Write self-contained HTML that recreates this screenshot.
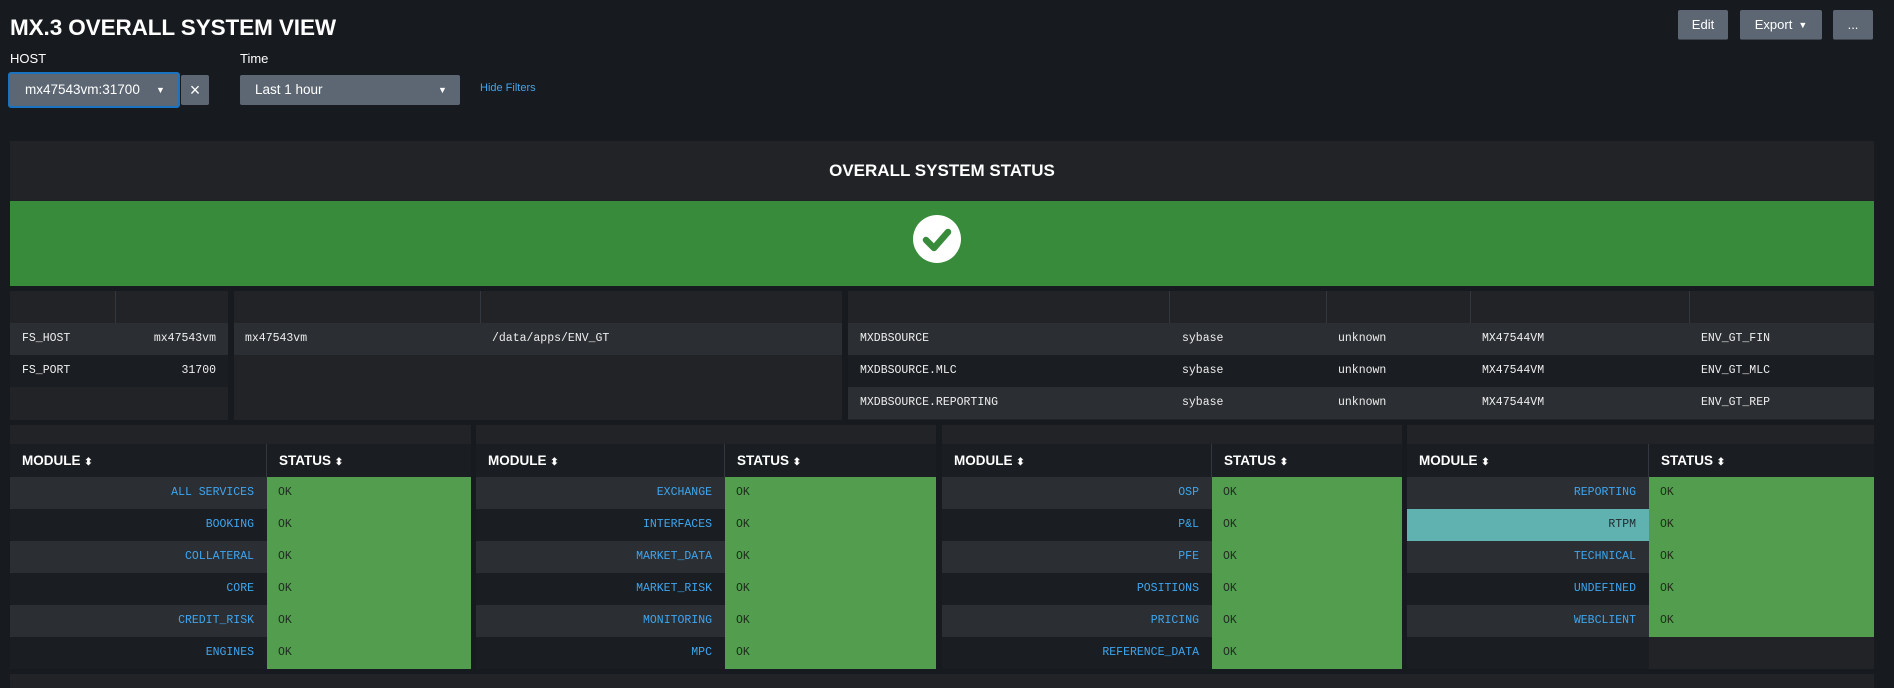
<!DOCTYPE html>
<html><head><meta charset="utf-8"><style>
*{margin:0;padding:0;box-sizing:border-box}
body{width:1894px;height:688px;background:#171a1e;position:relative;overflow:hidden;font-family:"Liberation Sans",sans-serif;color:#fff}
.a{position:absolute}
.btn{position:absolute;background:#5c6773;border-radius:2px;color:#fff;font-size:13px;display:flex;align-items:center;justify-content:center;border-bottom:1px solid #3f4650}
.mono{font-family:"Liberation Mono",monospace;font-size:11.5px;color:#eee}
.row{position:absolute;height:32px;line-height:32px}
.l{background:#2b2e32}.d{background:#1a1d21}.p{background:#212327}
.hdr{position:absolute;height:33px;background:#1a1d21;font-size:13.5px;font-weight:bold;line-height:33px}
.blue{color:#3ea6f0}
.ok{background:#529e4e;color:#1e2a1e}
</style></head><body>
<div class="a" style="left:10px;top:15px;font-size:22.5px;font-weight:bold;letter-spacing:-0.1px">MX.3 OVERALL SYSTEM VIEW</div>
<div class="btn" style="left:1678px;top:10px;width:50px;height:30px">Edit</div>
<div class="btn" style="left:1740px;top:10px;width:82px;height:30px">Export <span style="font-size:9px;margin-left:6px">▼</span></div>
<div class="btn" style="left:1833px;top:10px;width:40px;height:30px">...</div>
<div class="a" style="left:10px;top:51px;font-size:13px">HOST</div>
<div class="a" style="left:240px;top:51px;font-size:13px">Time</div>
<div class="a" style="left:8px;top:72px;width:172px;height:36px;border:2px solid #1a73c0;border-radius:3px;background:#5c6773;font-size:13.5px;padding-left:15px;line-height:32px">mx47543vm:31700<span style="position:absolute;left:146px;font-size:9px">▼</span></div>
<div class="a" style="left:181px;top:75px;width:28px;height:30px;background:#5c6773;border-radius:2px;text-align:center;line-height:30px;font-size:18px">×</div>
<div class="a" style="left:240px;top:75px;width:220px;height:30px;background:#5c6773;border-radius:2px;font-size:13.5px;padding-left:15px;line-height:30px">Last 1 hour<span style="position:absolute;left:198px;font-size:9px">▼</span></div>
<div class="a" style="left:480px;top:82px;font-size:11px;color:#3ea6f0">Hide Filters</div>

<div class="a p" style="left:10px;top:141px;width:1864px;height:60px;text-align:center;line-height:60px;font-size:17px;font-weight:bold">OVERALL SYSTEM STATUS</div>
<div class="a" style="left:10px;top:201px;width:1864px;height:85px;background:#378b3b"></div>
<svg class="a" style="left:913px;top:215px" width="48" height="48" viewBox="0 0 48 48"><circle cx="24" cy="24" r="24" fill="#fff"/><path d="M13 25 L21 33 L35 17" stroke="#378b3b" stroke-width="6.5" fill="none" stroke-linecap="round" stroke-linejoin="round"/></svg>

<div class="a p" style="left:10px;top:291px;width:218px;height:129px"></div>
<div class="a" style="left:115px;top:291px;width:1px;height:32px;background:#333840"></div>
<div class="row l mono" style="left:10px;top:323px;width:218px"><span style="position:absolute;left:12px">FS_HOST</span><span style="position:absolute;right:12px">mx47543vm</span></div>
<div class="row d mono" style="left:10px;top:355px;width:218px"><span style="position:absolute;left:12px">FS_PORT</span><span style="position:absolute;right:12px">31700</span></div>
<div class="a p" style="left:234px;top:291px;width:608px;height:129px"></div>
<div class="a" style="left:480px;top:291px;width:1px;height:32px;background:#333840"></div>
<div class="row l mono" style="left:234px;top:323px;width:608px"><span style="position:absolute;left:11px">mx47543vm</span><span style="position:absolute;left:258px">/data/apps/ENV_GT</span></div>
<div class="a p" style="left:848px;top:291px;width:1026px;height:129px"></div>
<div class="a" style="left:1169px;top:291px;width:1px;height:32px;background:#333840"></div>
<div class="a" style="left:1326px;top:291px;width:1px;height:32px;background:#333840"></div>
<div class="a" style="left:1470px;top:291px;width:1px;height:32px;background:#333840"></div>
<div class="a" style="left:1689px;top:291px;width:1px;height:32px;background:#333840"></div>
<div class="row l mono" style="left:848px;top:323px;width:1026px"><span class="a" style="left:12px">MXDBSOURCE</span><span class="a" style="left:334px">sybase</span><span class="a" style="left:490px">unknown</span><span class="a" style="left:634px">MX47544VM</span><span class="a" style="left:853px">ENV_GT_FIN</span></div>
<div class="row d mono" style="left:848px;top:355px;width:1026px"><span class="a" style="left:12px">MXDBSOURCE.MLC</span><span class="a" style="left:334px">sybase</span><span class="a" style="left:490px">unknown</span><span class="a" style="left:634px">MX47544VM</span><span class="a" style="left:853px">ENV_GT_MLC</span></div>
<div class="row l mono" style="left:848px;top:387px;width:1026px"><span class="a" style="left:12px">MXDBSOURCE.REPORTING</span><span class="a" style="left:334px">sybase</span><span class="a" style="left:490px">unknown</span><span class="a" style="left:634px">MX47544VM</span><span class="a" style="left:853px">ENV_GT_REP</span></div>

<div id="mods"></div>
<div class="a p" style="left:10px;top:674px;width:1864px;height:14px"></div>
<script>
var T=[[10,471,267,["ALL SERVICES","BOOKING","COLLATERAL","CORE","CREDIT_RISK","ENGINES"]],
[476,936,725,["EXCHANGE","INTERFACES","MARKET_DATA","MARKET_RISK","MONITORING","MPC"]],
[942,1402,1212,["OSP","P&amp;L","PFE","POSITIONS","PRICING","REFERENCE_DATA"]],
[1407,1874,1649,["REPORTING","RTPM","TECHNICAL","UNDEFINED","WEBCLIENT",""]]];
var h="";
T.forEach(function(t){var L=t[0],R=t[1],S=t[2],w=R-L;
h+='<div class="a p" style="left:'+L+'px;top:425px;width:'+w+'px;height:244px"></div>';
h+='<div class="hdr" style="left:'+L+'px;top:444px;width:'+w+'px"><span class="a" style="left:12px">MODULE <span style="font-size:10px">⬍</span></span><span class="a" style="left:'+(S-L+12)+'px">STATUS <span style="font-size:10px">⬍</span></span></div>';
h+='<div class="a" style="left:'+(S-1)+'px;top:444px;width:1px;height:33px;background:#333840"></div>';
t[3].forEach(function(m,i){var y=477+i*32;var cls=i%2?"d":"l";var bg="";var col="blue";
if(m=="RTPM"){bg="background:#60b2b1;";col="";}
h+='<div class="row '+cls+' mono" style="left:'+L+'px;top:'+y+'px;width:'+(S-L)+'px;'+bg+'"><span class="a '+col+'" style="right:13px;'+(col?'':'color:#1f2a2e')+'">'+m+'</span></div>';
if(m) h+='<div class="row ok mono" style="left:'+S+'px;top:'+y+'px;width:'+(R-S)+'px;padding-left:11px;color:#1e2a1e">OK</div>';
});});
document.getElementById("mods").innerHTML=h;
</script>
</body></html>
